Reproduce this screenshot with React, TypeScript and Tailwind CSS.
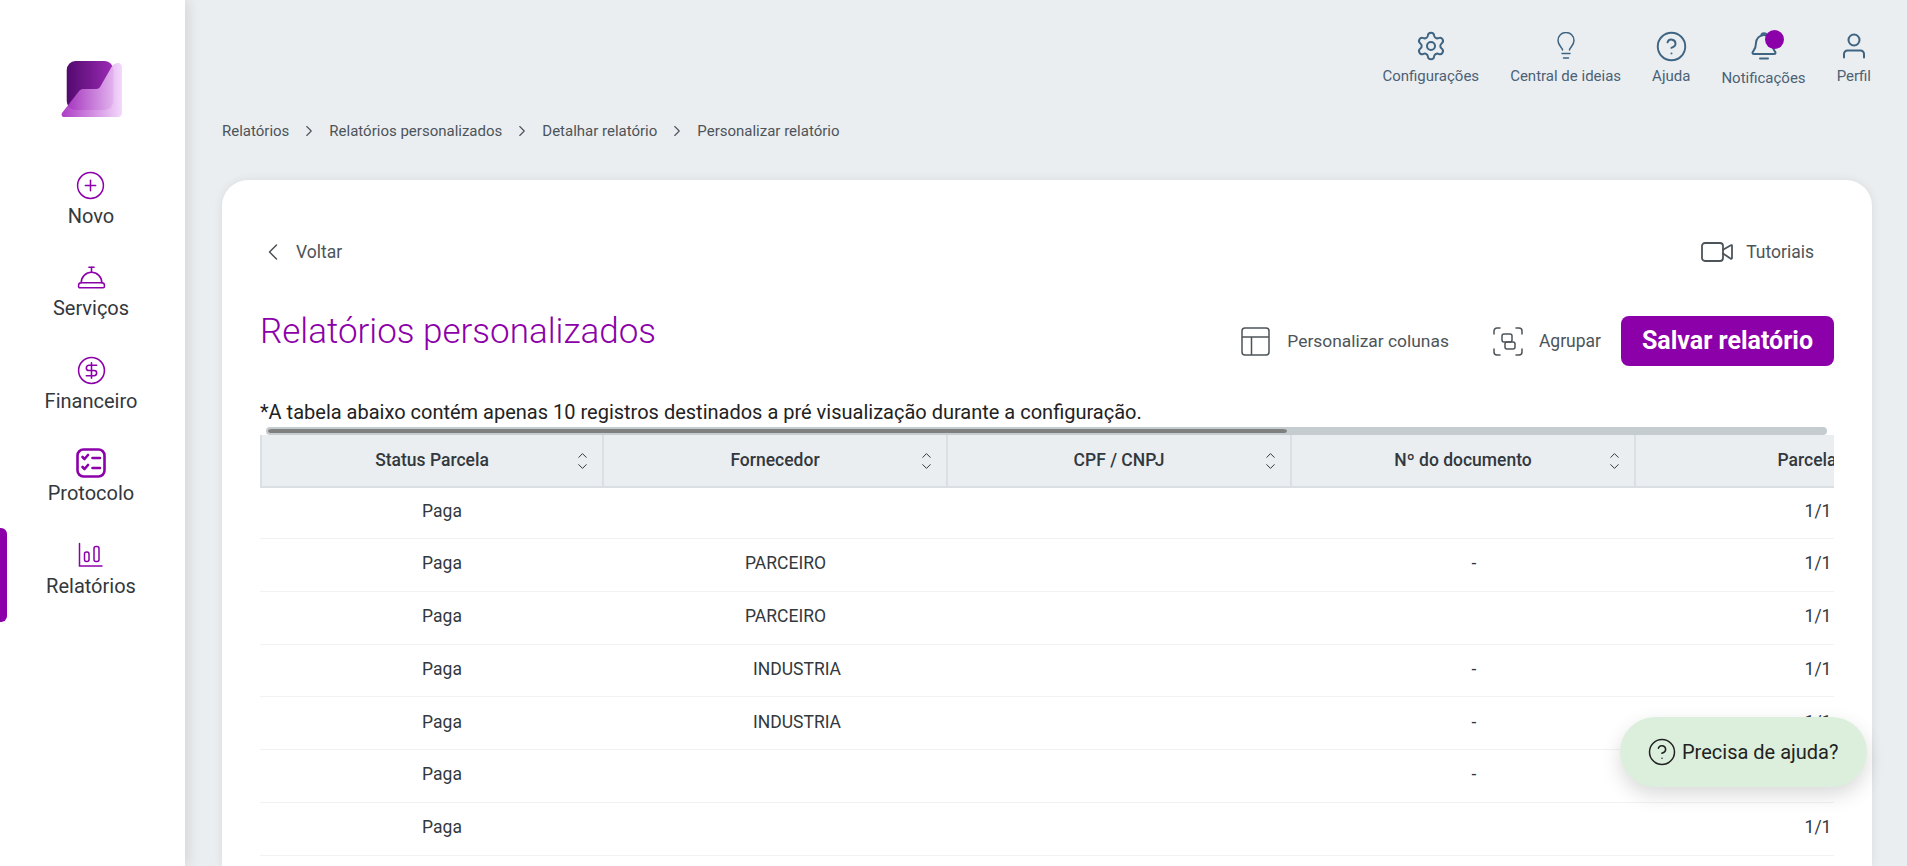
import { ChevronDown, ChevronLeft, ChevronRight, ChevronUp, CircleDollarSign, CircleHelp, CirclePlus, ConciergeBell, Settings, Video } from 'lucide-react'
import type { ReactNode } from 'react'

const purple = 'text-[#8c00aa]'

function Logo() {
  return (
    <svg width="61" height="58" viewBox="0 0 64 58" preserveAspectRatio="none" fill="none">
      <defs>
        <linearGradient id="logoDark" x1="0" y1="0" x2="1" y2="0">
          <stop offset="0" stopColor="#520a6e" />
          <stop offset="1" stopColor="#9c2bb5" />
        </linearGradient>
        <linearGradient id="logoLight" x1="0" y1="0" x2="1" y2="0">
          <stop offset="0" stopColor="#a62cc0" />
          <stop offset="1" stopColor="#f3d6fb" />
        </linearGradient>
      </defs>
      <rect x="6" y="1" width="49" height="49" rx="9" fill="url(#logoDark)" />
      <path d="M60 3c2 0 4 2 4 4v46c0 2-2 4-4 4H3c-2 0-3-2-2-4l18-22c1-1 2-2 4-2h14c2 0 3-1 4-2l12-20c1-2 4-4 7-4z" fill="url(#logoLight)" opacity="0.92" />
    </svg>
  )
}

function ProtocolIcon() {
  return (
    <svg width="30" height="30" viewBox="0 0 30 30" fill="none" stroke="currentColor" strokeWidth="2.6" strokeLinecap="round" strokeLinejoin="round">
      <rect x="1.500" y="1.500" width="27" height="27" rx="6" />
      <path d="M6.500 9l2 2 3.500-4M6.500 19l2 2 3.500-4" />
      <path d="M16.500 10h7.500M16.500 20h7.500" />
    </svg>
  )
}

function ReportIcon() {
  return (
    <svg width="26" height="26" viewBox="0 0 26 26" fill="none" stroke="currentColor" strokeWidth="1.500" strokeLinecap="round">
      <path d="M1.500 1.500v22.500h22.500" />
      <rect x="6.500" y="10" width="4.500" height="9.500" rx="2" />
      <rect x="16" y="4.500" width="5" height="15" rx="2" />
    </svg>
  )
}

function BulbIcon() {
  return (
    <svg width="20" height="28" viewBox="0 0 20 28" fill="none" stroke="currentColor" strokeWidth="1.500" strokeLinecap="round" strokeLinejoin="round">
      <path d="M6.500 18c0-2.500-4.500-4.500-4.500-9.500a8 8 0 0 1 16 0c0 5-4.500 7-4.500 9.500" />
      <path d="M6 21.500h8M7.500 26h5" />
    </svg>
  )
}

function BellIcon() {
  return (
    <svg width="26" height="30" viewBox="0 0 26 30" fill="none" stroke="currentColor" strokeWidth="2" strokeLinecap="round" strokeLinejoin="round">
      <path d="M13 4a8 8 0 0 0-8 8c0 6-3 8-3.500 9.500 0 .8.500 1.500 1.500 1.500h20c1 0 1.500-.7 1.500-1.500C24 20 21 18 21 12a8 8 0 0 0-8-8z" />
      <path d="M10.500 4.500c0-3 5-3 5 0M9 27.500h8" />
    </svg>
  )
}

function UserIcon() {
  return (
    <svg width="24" height="26" viewBox="0 0 24 26" fill="none" stroke="currentColor" strokeWidth="2" strokeLinecap="round" strokeLinejoin="round">
      <circle cx="12" cy="7" r="5.500" />
      <path d="M2 24.500V21a3.500 3.500 0 0 1 3.500-3.500h13A3.500 3.500 0 0 1 22 21v3.500" />
    </svg>
  )
}

function ColumnsIcon() {
  return (
    <svg width="29" height="29" viewBox="0 0 29 29" fill="none" stroke="currentColor" strokeWidth="1.500" strokeLinejoin="round">
      <rect x="1" y="1" width="27" height="27" rx="3" />
      <path d="M1 10h27M10.500 10v18" />
    </svg>
  )
}

function GroupIcon() {
  return (
    <svg width="30" height="29" viewBox="0 0 30 29" fill="none" stroke="currentColor" strokeWidth="1.500" strokeLinecap="round" strokeLinejoin="round">
      <path d="M1 7V4a3 3 0 0 1 3-3h3M23 1h3a3 3 0 0 1 3 3v3M29 22v3a3 3 0 0 1-3 3h-3M7 28H4a3 3 0 0 1-3-3v-3" />
      <rect x="9" y="7" width="10" height="8" rx="2" />
      <rect x="12" y="15" width="10" height="7" rx="2" />
    </svg>
  )
}

const navItems = [
  { label: 'Novo', icon: <CirclePlus size={31} strokeWidth={1.15} /> },
  { label: 'Serviços', icon: <ConciergeBell size={31} strokeWidth={1.2} /> },
  { label: 'Financeiro', icon: <CircleDollarSign size={31} strokeWidth={1.2} /> },
  { label: 'Protocolo', icon: <ProtocolIcon /> },
  { label: 'Relatórios', icon: <ReportIcon /> },
]

function Sidebar() {
  return (
    <aside className="relative z-10 flex h-full w-[185px] shrink-0 flex-col items-center bg-white pr-[3px] shadow-[4px_0_12px_rgba(0,0,0,0.09)]">
      <div className="mt-[60px] mb-[49px] h-[60px]">
        <Logo />
      </div>
      <nav className="flex flex-col items-center">
        {navItems.map(item => (
          <div key={item.label} className="flex h-[92.500px] flex-col items-center">
            <div className={`flex h-[32px] items-center justify-center ${purple}`}>{item.icon}</div>
            <span className="mt-[1.500px] text-[20px] leading-[26px] text-[#33383d]">{item.label}</span>
          </div>
        ))}
      </nav>
      <div className="absolute top-[528px] left-0 h-[94px] w-[7px] rounded-r-[6px] bg-[#8c00aa]" />
    </aside>
  )
}

function TopItem({ label, icon, badge, low }: { label: string; icon: ReactNode; badge?: boolean; low?: boolean }) {
  return (
    <div className="relative flex flex-col items-center">
      <div className="flex h-[32px] items-center justify-center text-[#3e6482]">{icon}</div>
      <span className={`${low ? 'mt-[6px]' : 'mt-[4px]'} text-[15px] leading-[20px] text-[#4a6176]`}>{label}</span>
      {badge && <div className="absolute top-[0px] left-[44px] h-[19px] w-[19px] rounded-full bg-[#8c00aa]" />}
    </div>
  )
}

const columns = ['Status Parcela', 'Fornecedor', 'CPF / CNPJ', 'Nº do documento', 'Parcela']

const rows = [
  { fornecedor: '', extra: 'pl-[19px]', doc: '' },
  { fornecedor: 'PARCEIRO', extra: 'pl-[19px]', doc: '-' },
  { fornecedor: 'PARCEIRO', extra: 'pl-[19px]', doc: '' },
  { fornecedor: 'INDUSTRIA', extra: 'pl-[42px]', doc: '-' },
  { fornecedor: 'INDUSTRIA', extra: 'pl-[42px]', doc: '-' },
  { fornecedor: '', extra: 'pl-[19px]', doc: '-' },
  { fornecedor: '', extra: 'pl-[19px]', doc: '' },
]

function ReportTable() {
  return (
    <div className="w-[1574px] overflow-hidden">
      <div className="ml-[6px] h-[8px] w-[1561px] rounded-full bg-[#c5ccd0]">
        <div className="ml-[2px] h-[8px] w-[1019px] rounded-full border-y-[2px] border-[#c5ccd0] bg-[#808080]" />
      </div>
      <div className="flex h-[53px] w-[1720px] border-b-2 border-[#d9dfe3] bg-[#eaeef1]">
        {columns.map((col, i) => (
          <div key={col} className={`relative flex w-[344px] shrink-0 items-center justify-center border-[#d9dfe3] ${i === 0 ? 'border-x-2' : 'border-r-2'}`}>
            <span className="text-[17.500px] font-medium text-[#33383d]">{col}</span>
            {i < 4 && (
              <span className="absolute right-[12px] flex flex-col items-center text-[#33383d]">
                <ChevronUp size={15} strokeWidth={1.600} className="mb-[-4px]" />
                <ChevronDown size={15} strokeWidth={1.600} />
              </span>
            )}
          </div>
        ))}
      </div>
      {rows.map((row, i) => (
        <div key={i} className={`flex w-[1720px] items-center border-b border-[#f0f2f4] pb-[3px] text-[17.500px] text-[#33383d] ${i === 0 ? 'h-[51px]' : 'h-[52.800px]'}`}>
          <div className="w-[344px] shrink-0 pl-[20px] text-center">Paga</div>
          <div className={`w-[344px] shrink-0 text-center ${row.extra}`}>{row.fornecedor}</div>
          <div className="w-[344px] shrink-0" />
          <div className="w-[344px] shrink-0 pl-[20px] text-center">{row.doc}</div>
          <div className="w-[344px] shrink-0 pl-[20px] text-center">1/1</div>
        </div>
      ))}
    </div>
  )
}

export default function App() {
  return (
    <div className="relative flex h-[866px] w-full overflow-hidden bg-[#eaeef1] font-['Roboto',sans-serif]">
      <Sidebar />
      <main className="flex min-w-0 flex-1 flex-col">
        <header className="flex h-[96px] shrink-0 justify-end gap-[31px] pt-[30px] pr-[36px]">
          <TopItem label="Configurações" icon={<Settings size={32} strokeWidth={1.500} />} />
          <TopItem label="Central de ideias" icon={<BulbIcon />} />
          <TopItem label="Ajuda" icon={<CircleHelp size={33} strokeWidth={1.400} />} />
          <TopItem label="Notificações" icon={<BellIcon />} badge low />
          <TopItem label="Perfil" icon={<UserIcon />} />
        </header>

        <div className="flex h-[84px] shrink-0 items-start pt-[25px] pl-[37px] text-[15px] leading-[20px] text-[#4d5459]">
          <span>Relatórios</span>
          <ChevronRight size={18} strokeWidth={1.500} className="mx-[11px] mt-[1px]" />
          <span>Relatórios personalizados</span>
          <ChevronRight size={18} strokeWidth={1.500} className="mx-[11px] mt-[1px]" />
          <span>Detalhar relatório</span>
          <ChevronRight size={18} strokeWidth={1.500} className="mx-[11px] mt-[1px]" />
          <span>Personalizar relatório</span>
        </div>

        <section className="mr-[35px] ml-[37px] flex-1 rounded-t-[26px] bg-white pt-[60px] pl-[38px] shadow-[0_0_10px_rgba(0,0,0,0.08)]">
          <div className="flex h-[24px] items-center justify-between pr-[58px] text-[#4d5459]">
            <div className="flex items-center">
              <ChevronLeft size={28} strokeWidth={1.300} className="mr-[9px] ml-[-1px]" />
              <span className="text-[17.500px]">Voltar</span>
            </div>
            <div className="flex items-center">
              <Video size={36} strokeWidth={1.200} className="mr-[11px]" />
              <span className="text-[17.500px]">Tutoriais</span>
            </div>
          </div>

          <div className="mt-[52px] flex h-[50px] items-center justify-between pr-[38px]">
            <h1 className={`mt-[-18px] text-[35px] font-light ${purple}`}>Relatórios personalizados</h1>
            <div className="flex items-center text-[#4d5459]">
              <ColumnsIcon />
              <span className="mr-[44px] ml-[17px] text-[17.400px]">Personalizar colunas</span>
              <GroupIcon />
              <span className="mr-[20px] ml-[16px] text-[17.500px]">Agrupar</span>
              <button className="h-[50px] w-[213px] rounded-[8px] bg-[#8c00aa] text-[25px] font-bold text-white">Salvar relatório</button>
            </div>
          </div>

          <p className="mt-[33px] h-[28px] text-[20px] leading-[26px] text-[#222]">
            *A tabela abaixo contém apenas 10 registros destinados a pré visualização durante a configuração.
          </p>
          <ReportTable />
        </section>
      </main>

      <div className="absolute top-[717px] left-[1620px] flex h-[70px] w-[247px] items-center rounded-[35px] bg-[#dcefdc] pl-[27px] shadow-[0_8px_20px_rgba(0,0,0,0.15)]">
        <CircleHelp size={30} strokeWidth={1.200} className="text-[#222]" />
        <span className="ml-[5px] text-[20px] text-[#222]">Precisa de ajuda?</span>
      </div>
    </div>
  )
}
